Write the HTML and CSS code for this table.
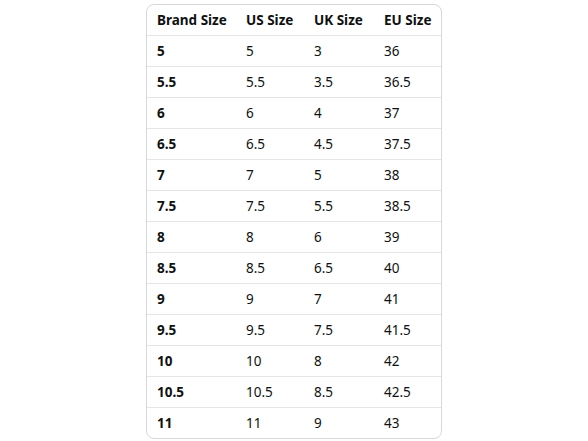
FILE: index.html
```html
<!DOCTYPE html>
<html>
<head>
<meta charset="utf-8">
<link rel="stylesheet" href="styles.css">
</head>
<body>
<div class="card">
<table class="sizes">
<colgroup><col class="c1"><col class="c2"><col class="c3"><col class="c4"></colgroup>
<thead><tr><th>Brand Size</th><th>US Size</th><th>UK Size</th><th>EU Size</th></tr></thead>
<tbody>
<tr><th>5</th><td>5</td><td>3</td><td>36</td></tr>
<tr><th>5.5</th><td>5.5</td><td>3.5</td><td>36.5</td></tr>
<tr><th>6</th><td>6</td><td>4</td><td>37</td></tr>
<tr><th>6.5</th><td>6.5</td><td>4.5</td><td>37.5</td></tr>
<tr><th>7</th><td>7</td><td>5</td><td>38</td></tr>
<tr><th>7.5</th><td>7.5</td><td>5.5</td><td>38.5</td></tr>
<tr><th>8</th><td>8</td><td>6</td><td>39</td></tr>
<tr><th>8.5</th><td>8.5</td><td>6.5</td><td>40</td></tr>
<tr><th>9</th><td>9</td><td>7</td><td>41</td></tr>
<tr><th>9.5</th><td>9.5</td><td>7.5</td><td>41.5</td></tr>
<tr><th>10</th><td>10</td><td>8</td><td>42</td></tr>
<tr><th>10.5</th><td>10.5</td><td>8.5</td><td>42.5</td></tr>
<tr><th>11</th><td>11</td><td>9</td><td>43</td></tr>
</tbody>
</table>
</div>
</body>
</html>
```
FILE: styles.css
```css
html, body { margin: 0; padding: 0; background: #fff; }
body { font-family: "Noto Sans", "Open Sans", sans-serif; color: #0f1111; }
.card {
  width: 296px;
  margin: 4px auto 0;
  border: 1px solid #d5d9d9;
  border-radius: 8px;
  overflow: hidden;
  box-sizing: border-box;
}
.sizes { width: 100%; border-collapse: collapse; table-layout: fixed; font-size: 13.5px; }
.c1 { width: 89px; } .c2 { width: 68px; } .c3 { width: 70px; } .c4 { width: auto; }
.sizes th, .sizes td {
  height: 31px; padding: 0 0 0 10px; text-align: left; vertical-align: middle;
  border-top: 1px solid #e3e6e6; box-sizing: border-box; line-height: 18px;
}
.sizes thead th { border-top: none; height: 30px; }
.sizes th { font-weight: 700; }
.sizes td { font-weight: 400; }
```
